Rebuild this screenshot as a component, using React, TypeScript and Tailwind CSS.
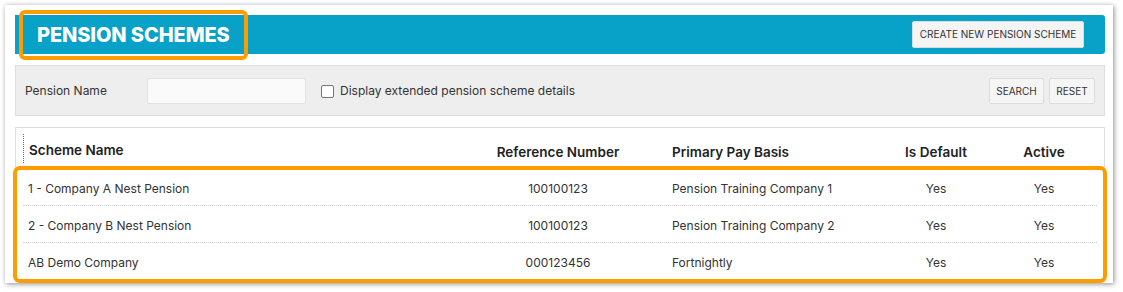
import React from "react";

const rows = [
  { name: "1 - Company A Nest Pension", ref: "100100123", basis: "Pension Training Company 1", def: "Yes", active: "Yes" },
  { name: "2 - Company B Nest Pension", ref: "100100123", basis: "Pension Training Company 2", def: "Yes", active: "Yes" },
  { name: "AB Demo Company", ref: "000123456", basis: "Fortnightly", def: "Yes", active: "Yes" },
];

const cols = "grid grid-cols-[425px_220px_202px_132px_84px_1fr]";

export default function App() {
  return (
    <div className="w-[1123px] h-[292px] bg-white pt-[5px] pl-[5px] font-['Inter',sans-serif] text-[#333]">
      <div className="relative w-[1108px] h-[278px] bg-white pl-[10px] pr-[8px] pt-[10px] shadow-[1px_1px_5px_rgba(0,0,0,0.45)]">
        {/* title bar */}
        <div className="flex items-center justify-between h-[39px] bg-[#08a1c8] rounded-r-[3px] pl-[22px] pr-[21px]">
          <h1 className="text-[20px] font-extrabold text-white tracking-[-0.1px] leading-none">PENSION SCHEMES</h1>
          <button className="h-[27px] w-[172px] bg-[#f4f4f4] border border-[#dcdcdc] rounded-[2px] text-[10px] text-[#333]">
            CREATE NEW PENSION SCHEME
          </button>
        </div>

        {/* search panel */}
        <div className="mt-[11px] h-[51px] bg-[#eeeeee] border border-[#dddddd] flex items-center pl-[9px] pr-[9px] text-[12px] pt-[1px]">
          <span className="w-[122px]">Pension Name</span>
          <input className="w-[159px] h-[26px] bg-[#fafafa] border border-[#e2e2e2] rounded-[2px]" />
          <label className="flex items-center ml-[15px]">
            <span className="w-[13px] h-[13px] border border-[#767676] rounded-[2px] bg-white" />
            <span className="ml-[6px]">Display extended pension scheme details</span>
          </label>
          <div className="ml-auto flex gap-[5px]">
            <button className="h-[26px] w-[55px] bg-[#f5f5f5] border border-[#dcdcdc] rounded-[2px] text-[10px] text-[#333]">SEARCH</button>
            <button className="h-[26px] w-[46px] bg-[#f5f5f5] border border-[#dcdcdc] rounded-[2px] text-[10px] text-[#333]">RESET</button>
          </div>
        </div>

        {/* results table */}
        <div className="mt-[11px] h-[155px] border border-[#dddddd] px-[7px]">
          <div className={`${cols} h-[41px] text-[13.5px] font-semibold text-[#222]`}>
            <div className="mt-[6px] h-[29px] border-l border-dotted border-[#1a8fc0] pl-[5px] pt-[6px]">Scheme Name</div>
            <div className="text-center pt-[14px]">Reference Number</div>
            <div className="pl-[4px] pt-[14px]">Primary Pay Basis</div>
            <div className="text-center pt-[14px]">Is Default</div>
            <div className="text-center pt-[14px]">Active</div>
            <div />
          </div>
          {rows.map((r, i) => (
            <div
              key={i}
              className={`${cols} h-[37px] items-center text-[12px] pt-[3px] ${i < rows.length - 1 ? "border-b border-dotted border-[#cccccc]" : ""}`}
            >
              <div className="pl-[5px]">{r.name}</div>
              <div className="text-center">{r.ref}</div>
              <div className="pl-[4px]">{r.basis}</div>
              <div className="text-center">{r.def}</div>
              <div className="text-center">{r.active}</div>
              <div />
            </div>
          ))}
        </div>

        {/* highlight annotations */}
        <div className="absolute left-[14px] top-[5px] w-[229px] h-[50px] border-4 border-[#ff9c00] rounded-[6px] pointer-events-none" />
        <div className="absolute left-[8px] top-[161px] w-[1094px] h-[117px] border-4 border-[#ff9c00] rounded-[7px] pointer-events-none" />
      </div>
    </div>
  );
}
